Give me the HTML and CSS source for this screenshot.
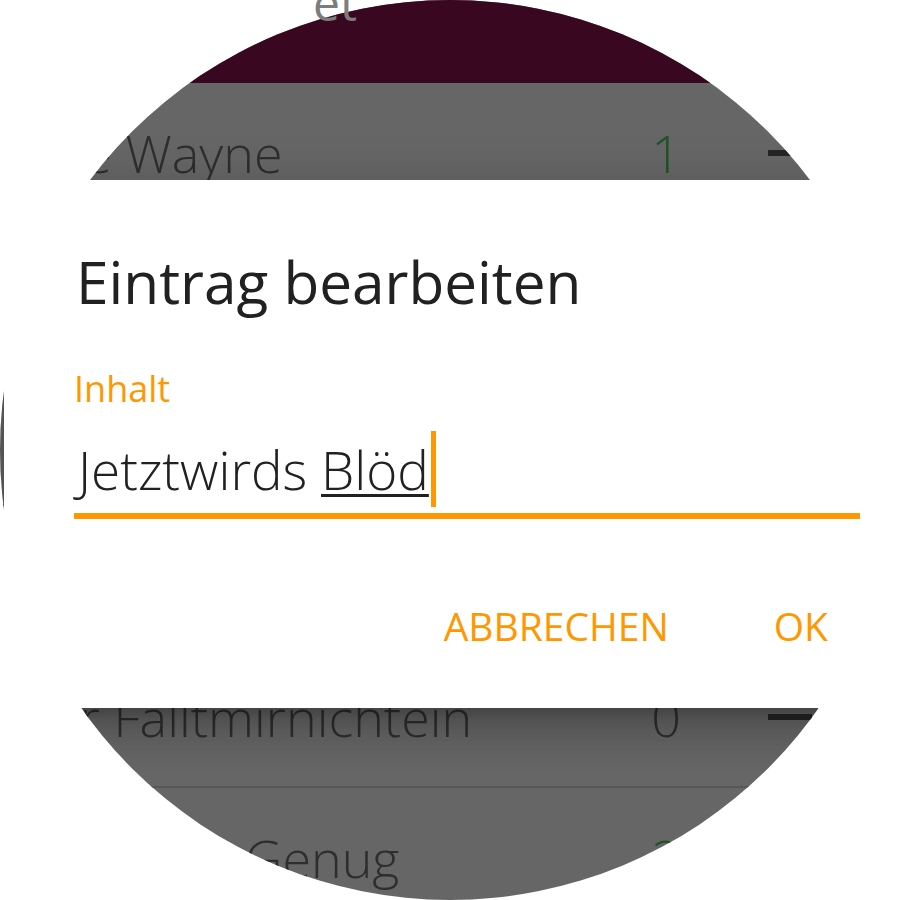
FILE: index.html
```html
<!DOCTYPE html>
<html lang="de">
<head>
<meta charset="utf-8">
<title>Eintrag bearbeiten</title>
<link rel="stylesheet" href="styles.css">
</head>
<body>
<div class="watch">
  <div class="screen">
    <div class="appbar"></div>
    <ul class="list">
      <li class="row"><span class="name">Joe Wayne</span><span class="count pos">1</span><span class="minus"></span></li>
      <li class="row"><span class="name">Peter Parker</span><span class="count">0</span><span class="minus"></span></li>
      <li class="row"><span class="name">Clark Kent</span><span class="count">0</span><span class="minus"></span></li>
      <li class="row"><span class="name">Tony Stark</span><span class="count">0</span><span class="minus"></span></li>
      <li class="row"><span class="name">Or Falltmirnichtein</span><span class="count">0</span><span class="minus"></span></li>
      <li class="row"><span class="name">Mehr ist Genug</span><span class="count pos">2</span><span class="minus"></span></li>
    </ul>
  </div>
  <span class="apptitle">et</span>
  <div class="dialog">
    <h2 class="title">Eintrag bearbeiten</h2>
    <div class="field">
      <div class="label">Inhalt</div>
      <div class="input"><span>Jetztwirds </span><span class="composing">Blöd</span><span class="caret"></span></div>
    </div>
    <div class="actions">
      <span class="btn">ABBRECHEN</span>
      <span class="btn">OK</span>
    </div>
  </div>
</div>
</body>
</html>
```
FILE: styles.css
```css
html, body {
  margin: 0;
  padding: 0;
  background: #ffffff;
}

body {
  font-family: "Open Sans", "Noto Sans", sans-serif;
}

.watch {
  position: relative;
  width: 900px;
  height: 900px;
  overflow: hidden;
}

.screen {
  position: relative;
  width: 900px;
  height: 900px;
  border-radius: 50%;
  overflow: hidden;
  background: #666666;
  display: flex;
  flex-direction: column;
}

/* dialog elevation shadow, clipped to the round screen */
.screen::after {
  content: "";
  position: absolute;
  top: 180px;
  left: 4px;
  width: 896px;
  height: 528px;
  background: #ffffff;
  box-shadow: 0 24px 38px 3px rgba(0,0,0,.14), 0 9px 46px 8px rgba(0,0,0,.12), 0 11px 15px -7px rgba(0,0,0,.2);
}

.appbar {
  height: 83px;
  flex: none;
  background: #390820;
}

.list {
  list-style: none;
  margin: 0;
  padding: 0;
}

.row {
  box-sizing: border-box;
  height: 141px;
  border-bottom: 2px solid #575757;
  display: flex;
  align-items: center;
  padding: 0 88px 0 40px;
  font-weight: 300;
  font-size: 52px;
  line-height: 52px;
  color: #2e2e2e;
}

.name {
  flex: 1;
  white-space: nowrap;
}

.count {
  width: 80px;
  text-align: right;
}

.count.pos {
  color: #1f5525;
}

.minus {
  width: 44px;
  height: 6px;
  margin-left: 87px;
  background: #262626;
}

.apptitle {
  position: absolute;
  left: 313px;
  top: -21px;
  font-size: 48px;
  line-height: 48px;
  color: #7c7c7c;
}

.dialog {
  position: absolute;
  top: 180px;
  left: 4px;
  width: 896px;
  height: 528px;
  box-sizing: border-box;
  padding-left: 70px;
  background: #ffffff;
  display: flex;
  flex-direction: column;
}

.title {
  margin: 72px 0 0 2px;
  font-size: 58.5px;
  line-height: 58px;
  font-weight: 500;
  color: #212121;
}

.field {
  margin-top: 61px;
}

.label {
  font-size: 36px;
  line-height: 36px;
  color: #ff9800;
}

.input {
  margin-top: 37px;
  width: 786px;
  padding-bottom: 17px;
  border-bottom: 6px solid #ff9800;
  font-size: 53px;
  line-height: 52px;
  font-weight: 300;
  color: #212121;
  white-space: nowrap;
}

.input span:first-child {
  margin-left: 4px;
}

.composing {
  text-decoration: underline;
  text-decoration-thickness: 3px;
  text-underline-offset: 4px;
}

.caret {
  display: inline-block;
  width: 5px;
  height: 76px;
  margin: -13px 0 -11px 2px;
  vertical-align: -6px;
  background: #ff9800;
}

.actions {
  margin-top: 87px;
  display: flex;
  justify-content: flex-end;
  gap: 105px;
  padding-right: 72px;
}

.btn {
  font-size: 39px;
  line-height: 40px;
  font-weight: 500;
  color: #ff9800;
}
```
